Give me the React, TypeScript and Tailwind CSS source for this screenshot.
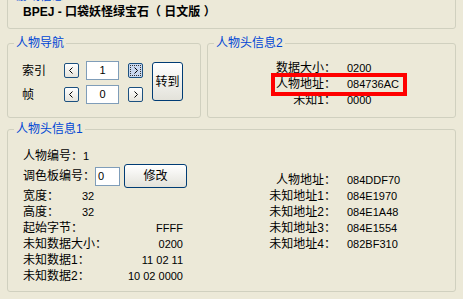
import type { ReactNode } from "react"

function GroupBox({ title, className = "", children }: { title: string; className?: string; children: ReactNode }) {
  return (
    <fieldset className={`min-w-0 rounded-[3px] border border-[#D0D0BF] ${className}`}>
      <legend className="ml-[6px] px-[2px] leading-[14px] text-[#0046D5]">{title}</legend>
      {children}
    </fieldset>
  )
}

function Chevron({ dir }: { dir: "left" | "right" }) {
  return (
    <svg width="13" height="13" viewBox="0 0 13 13" className="block">
      <path
        d={dir === "left" ? "M7.5 3.5 L4.5 6.5 L7.5 9.5" : "M5.5 3.5 L8.5 6.5 L5.5 9.5"}
        fill="none"
        stroke="#000"
        strokeWidth="1"
      />
    </svg>
  )
}

function SmallButton({ dir, focused = false }: { dir: "left" | "right"; focused?: boolean }) {
  return (
    <button
      type="button"
      className={`grid size-[15px] place-items-center rounded-[2px] border border-[#1C5180] ${
        focused ? "bg-[#c9d8f0] outline-1 outline-dotted outline-offset-[-3px] outline-[#333]" : "bg-gradient-to-b from-white to-[#e6e4dc]"
      }`}
    >
      <Chevron dir={dir} />
    </button>
  )
}

function NumberInput({ value, className = "" }: { value: string; className?: string }) {
  return (
    <div className={`flex h-[19px] items-center border border-[#7F9DB9] bg-white text-[11px] ${className}`}>
      {value}
    </div>
  )
}

function InfoGrid({ rows }: { rows: [string, string][] }) {
  return (
    <div className="grid grid-cols-[70px_auto] gap-x-[11px] leading-[16px]">
      {rows.map(([label, value]) => (
        <div key={label} className="contents">
          <span className="text-right">{label}</span>
          <span className="text-[11px]">{value}</span>
        </div>
      ))}
    </div>
  )
}

export default function App() {
  return (
    <div className="h-[299px] w-[463px] overflow-hidden bg-[#ECE9D8] px-[7px] font-['Liberation_Sans','Noto_Sans_CJK_SC',sans-serif] text-[12px] text-black">
      <GroupBox title="游戏信息" className="-mt-[11px]">
        <div className="pb-[8px] pl-[15px] pt-[2px] leading-[15px] font-bold">BPEJ - 口袋妖怪绿宝石（ 日文版 ）</div>
      </GroupBox>

      <div className="mt-[7px] flex gap-[6px]">
        <GroupBox title="人物导航" className="w-[194px] shrink-0">
          <div className="flex pb-[13px] pl-[14px] pt-[11px]">
            <div className="flex flex-col gap-[5px]">
              <div className="flex h-[19px] items-center">
                <span className="w-[42px]">索引</span>
                <SmallButton dir="left" />
                <NumberInput value="1" className="ml-[7px] w-[33px] justify-center" />
                <div className="ml-[9px]">
                  <SmallButton dir="right" focused />
                </div>
              </div>
              <div className="flex h-[19px] items-center">
                <span className="w-[42px]">帧</span>
                <SmallButton dir="left" />
                <NumberInput value="0" className="ml-[7px] w-[33px] justify-center" />
                <div className="ml-[9px]">
                  <SmallButton dir="right" />
                </div>
              </div>
            </div>
            <button
              type="button"
              className="ml-[9px] mt-[1px] h-[39px] w-[31px] rounded-[3px] border border-[#003C74] bg-gradient-to-b from-white to-[#e3e2da] text-[12px]"
            >
              转到
            </button>
          </div>
        </GroupBox>

        <GroupBox title="人物头信息2" className="flex-1">
          <div className="relative pl-[58px] pt-[10px]">
            <InfoGrid
              rows={[
                ["数据大小：", "0200"],
                ["人物地址：", "084736AC"],
                ["未知1：", "0000"],
              ]}
            />
            <div className="pointer-events-none absolute left-[63px] top-[23px] h-[23px] w-[136px] border-[4px] border-[#FF0000]" />
          </div>
        </GroupBox>
      </div>

      <GroupBox title="人物头信息1" className="mt-[4px]">
        <div className="flex pb-[7px]">
          <div className="w-[182px] shrink-0 pl-[15px] pt-[12px] leading-[16px]">
            <div className="h-[16px]">
              人物编号：<span className="text-[11px]">1</span>
            </div>
            <div className="flex h-[24px] items-center">
              <span>调色板编号：</span>
              <NumberInput value="0" className="w-[25px] pl-[2px]" />
              <button
                type="button"
                className="ml-[4px] h-[24px] w-[63px] rounded-[3px] border border-[#003C74] bg-gradient-to-b from-white to-[#e3e2da] text-[12px]"
              >
                修改
              </button>
            </div>
            <div className="h-[16px]">
              <span className="inline-block w-[59px]">宽度：</span>
              <span className="text-[11px]">32</span>
            </div>
            <div className="h-[16px]">
              <span className="inline-block w-[59px]">高度：</span>
              <span className="text-[11px]">32</span>
            </div>
            {[
              ["起始字节：", "FFFF"],
              ["未知数据大小：", "0200"],
              ["未知数据1：", "11 02 11"],
              ["未知数据2：", "10 02 0000"],
            ].map(([label, value]) => (
              <div key={label} className="flex h-[16px] w-[160px] justify-between">
                <span>{label}</span>
                <span className="text-[11px]">{value}</span>
              </div>
            ))}
          </div>
          <div className="ml-[76px] pt-[36px]">
            <InfoGrid
              rows={[
                ["人物地址：", "084DDF70"],
                ["未知地址1：", "084E1970"],
                ["未知地址2：", "084E1A48"],
                ["未知地址3：", "084E1554"],
                ["未知地址4：", "082BF310"],
              ]}
            />
          </div>
        </div>
      </GroupBox>
    </div>
  )
}
